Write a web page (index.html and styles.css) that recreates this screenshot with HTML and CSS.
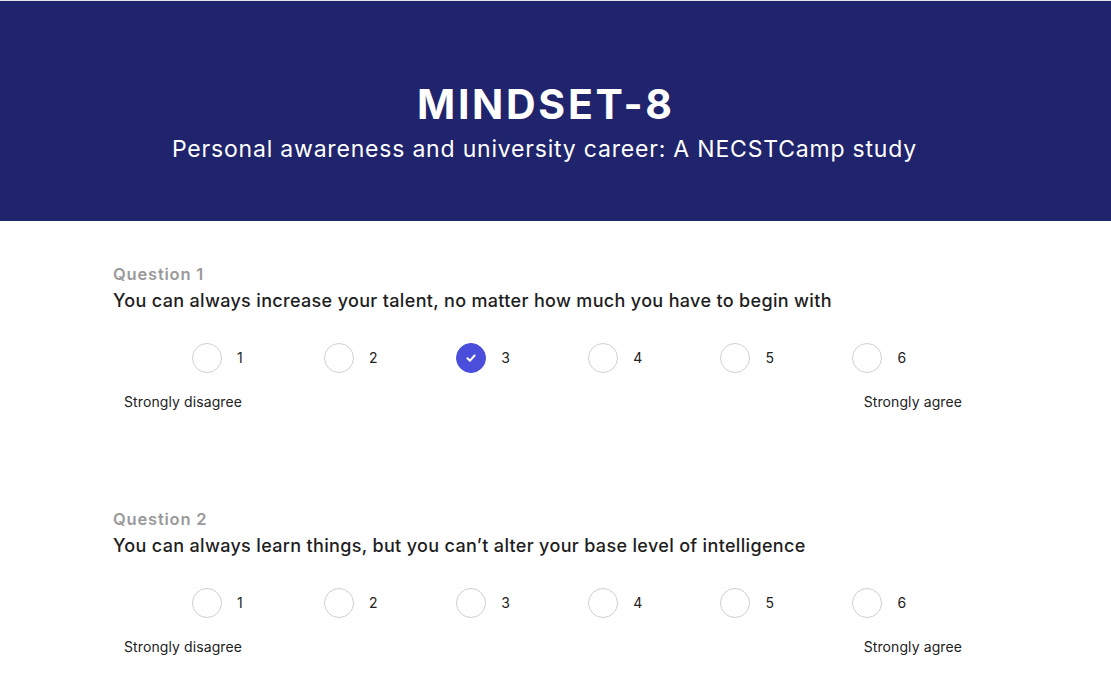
FILE: index.html
```html
<!DOCTYPE html>
<html lang="en">
<head>
<meta charset="utf-8">
<title>MINDSET-8</title>
<link rel="stylesheet" href="styles.css">
</head>
<body>
<header class="hero">
  <h1 class="hero-title">MINDSET-8</h1>
  <p class="hero-sub">Personal awareness and university career: A NECSTCamp study</p>
</header>
<main class="survey">
  <section class="question">
    <div class="q-num">Question 1</div>
    <div class="q-text">You can always increase your talent, no matter how much you have to begin with</div>
    <div class="scale">
      <label class="opt"><span class="radio"></span><span class="num">1</span></label>
      <label class="opt"><span class="radio"></span><span class="num">2</span></label>
      <label class="opt"><span class="radio checked"><svg viewBox="0 0 12 12" width="12" height="12"><path d="M2.4 6.2 L5 8.7 L9.6 3.5" fill="none" stroke="#fff" stroke-width="2" stroke-linecap="round" stroke-linejoin="round"/></svg></span><span class="num">3</span></label>
      <label class="opt"><span class="radio"></span><span class="num">4</span></label>
      <label class="opt"><span class="radio"></span><span class="num">5</span></label>
      <label class="opt"><span class="radio"></span><span class="num">6</span></label>
    </div>
    <div class="anchors"><span>Strongly disagree</span><span>Strongly agree</span></div>
  </section>
  <section class="question">
    <div class="q-num">Question 2</div>
    <div class="q-text">You can always learn things, but you can’t alter your base level of intelligence</div>
    <div class="scale">
      <label class="opt"><span class="radio"></span><span class="num">1</span></label>
      <label class="opt"><span class="radio"></span><span class="num">2</span></label>
      <label class="opt"><span class="radio"></span><span class="num">3</span></label>
      <label class="opt"><span class="radio"></span><span class="num">4</span></label>
      <label class="opt"><span class="radio"></span><span class="num">5</span></label>
      <label class="opt"><span class="radio"></span><span class="num">6</span></label>
    </div>
    <div class="anchors"><span>Strongly disagree</span><span>Strongly agree</span></div>
  </section>
</main>
</body>
</html>
```
FILE: styles.css
```css
html, body {
  margin: 0;
  padding: 0;
  background: #fff;
}
body {
  font-family: Inter, "Open Sans", "Liberation Sans", sans-serif;
  color: #222;
  border-top: 1px solid #e6e6ea;
  overflow: hidden;
}
.hero {
  background: #20246c;
  color: #fff;
  height: 220px;
  box-sizing: border-box;
  padding: 78px 22px 0 0;
  text-align: center;
}
.hero-title {
  margin: 0;
  font-size: 41px;
  line-height: 50px;
  font-weight: 700;
  letter-spacing: 2.7px;
  text-indent: 2.7px;
}
.hero-sub {
  margin: 5px 0 0;
  font-size: 23px;
  line-height: 30px;
  font-weight: 400;
  letter-spacing: 0.8px;
}
.survey {
  width: 885px;
  margin: 0 auto;
  padding-top: 43px;
}
.question + .question {
  margin-top: 97px;
}
.q-num {
  font-size: 16.5px;
  line-height: 20px;
  font-weight: 600;
  color: #9a9a9a;
  letter-spacing: 0.8px;
}
.q-text {
  margin-top: 5px;
  font-size: 18px;
  line-height: 24px;
  font-weight: 500;
  color: #1e1e1e;
  letter-spacing: 0.33px;
}
.scale {
  margin-top: 30px;
  margin-left: 79px;
  display: grid;
  grid-template-columns: repeat(6, 132.1px);
}
.opt {
  display: flex;
  align-items: center;
  gap: 15px;
}
.radio {
  width: 30px;
  height: 30px;
  box-sizing: border-box;
  border: 1px solid #cfcfcf;
  border-radius: 50%;
  background: #fff;
  display: flex;
  align-items: center;
  justify-content: center;
}
.radio.checked {
  background: #4a4edb;
  border-color: #4a4edb;
}
.num {
  font-size: 14px;
  line-height: 20px;
  color: #222;
}
.anchors {
  margin-top: 19px;
  display: flex;
  justify-content: space-between;
  padding: 0 36px 0 11px;
  font-size: 14px;
  line-height: 20px;
  color: #222;
  letter-spacing: 0.1px;
}
```
